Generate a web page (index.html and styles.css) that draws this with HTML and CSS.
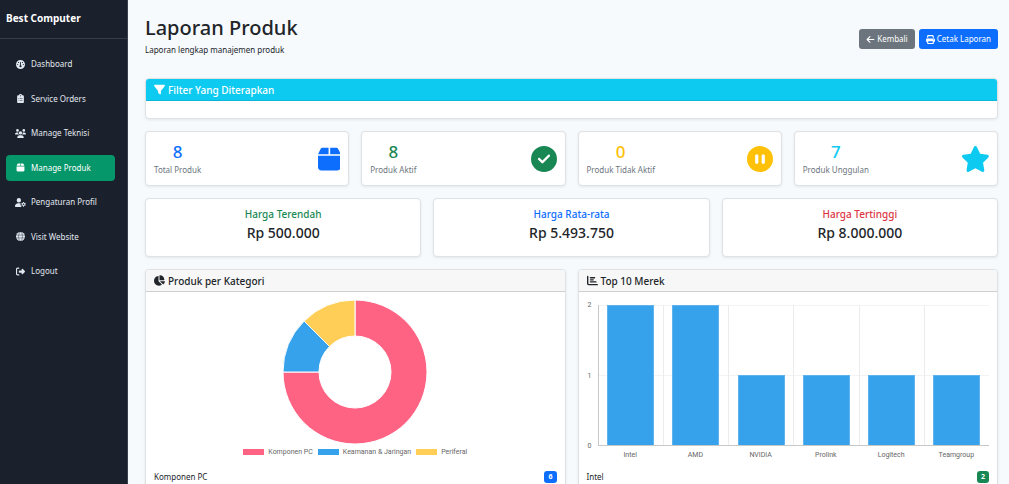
FILE: index.html
```html
<!DOCTYPE html>
<html lang="id">
<head>
<meta charset="utf-8">
<meta name="viewport" content="width=device-width, initial-scale=1">
<title>Laporan Produk</title>
<link rel="stylesheet" href="styles.css">
</head>
<body>
<aside class="sidebar">
  <div class="brand">Best Computer</div>
  <nav class="nav">
    <a class="nav-item" href="#"><svg class="nav-icon" viewBox="0 0 512 512"><path fill-rule="evenodd" d="M0 256a256 256 0 1 1 512 0A256 256 0 1 1 0 256zM320 352c0-26-16-48-40-59V120h-48v173c-24 11-40 33-40 59a64 64 0 1 0 128 0zM144 176a32 32 0 1 0 0-64 32 32 0 1 0 0 64zm-16 80a32 32 0 1 0-64 0 32 32 0 1 0 64 0zm288 32a32 32 0 1 0 0-64 32 32 0 1 0 0 64zM400 144a32 32 0 1 0-64 0 32 32 0 1 0 64 0z"/></svg>Dashboard</a>
    <a class="nav-item" href="#"><svg class="nav-icon" viewBox="0 0 512 512"><path fill-rule="evenodd" d="M256 0c-42 0-77 27-90 64h-38c-35 0-64 29-64 64v320c0 35 29 64 64 64h256c35 0 64-29 64-64V128c0-35-29-64-64-64h-38C333 27 298 0 256 0zm0 64a32 32 0 1 1 0 64 32 32 0 1 1 0-64zM144 256a24 24 0 1 1 48 0 24 24 0 1 1-48 0zm80-16h144v32H224zM144 352a24 24 0 1 1 48 0 24 24 0 1 1-48 0zm80-16h144v32H224z"/></svg>Service Orders</a>
    <a class="nav-item" href="#"><svg class="nav-icon" viewBox="0 0 640 512"><path d="M144 0a80 80 0 1 1 0 160 80 80 0 1 1 0-160zm368 0a80 80 0 1 1 0 160 80 80 0 1 1 0-160zM0 299c0-59 48-107 107-107h43c16 0 31 4 44 10-13 48 5 90 42 118H21c-12 0-21-10-21-21zm405 21c36-28 54-70 42-118 14-6 29-10 44-10h43c59 0 106 48 106 107 0 11-9 21-21 21H405zM224 224a96 96 0 1 1 192 0 96 96 0 1 1-192 0zM128 485c0-73 60-133 133-133h118c73 0 133 60 133 133 0 15-12 27-27 27H155c-15 0-27-12-27-27z"/></svg>Manage Teknisi</a>
    <a class="nav-item active" href="#" aria-current="page"><svg class="nav-icon" viewBox="0 0 448 512"><path d="M50.700 58.500L0 160H208V32H93.700C75.500 32 58.900 42.300 50.700 58.500zM240 160H448L397.300 58.500C389.100 42.300 372.500 32 354.300 32H240V160zm208 32H0V416c0 35.300 28.700 64 64 64H384c35.300 0 64-28.700 64-64V192z"/></svg>Manage Produk</a>
    <a class="nav-item" href="#"><svg class="nav-icon" viewBox="0 0 640 512"><path fill-rule="evenodd" d="M224 0a128 128 0 1 1 0 256 128 128 0 1 1 0-256zM178 304h92c20 0 40 3 58 10-18 60-2 130 46 178l24 20H30c-17 0-30-13-30-30 0-98 80-178 178-178zM472 224h48l10 46 28 16 45-15 24 42-35 31v32l35 31-24 42-45-15-28 16-10 46h-48l-10-46-28-16-45 15-24-42 35-31v-32l-35-31 24-42 45 15 28-16zm24 88a48 48 0 1 0 0 96 48 48 0 1 0 0-96z"/></svg>Pengaturan Profil</a>
    <a class="nav-item" href="#"><svg class="nav-icon" viewBox="0 0 512 512"><circle cx="256" cy="256" r="256"/><g class="globe-lines"><ellipse cx="256" cy="256" rx="112" ry="256"/><path d="M0 176h512M0 336h512"/></g></svg>Visit Website</a>
    <a class="nav-item" href="#"><svg class="nav-icon" viewBox="0 0 512 512"><path d="M377.900 105.900L500.700 228.700c7.200 7.200 11.300 17.100 11.300 27.300s-4.100 20.100-11.300 27.300L377.900 406.100c-6.400 6.400-15 9.900-24 9.900-18.700 0-33.900-15.200-33.900-33.900V320H192c-17.700 0-32-14.300-32-32v-64c0-17.700 14.300-32 32-32h128v-62.100c0-18.700 15.200-33.900 33.900-33.900 9 0 17.600 3.600 24 9.900zM160 96H96c-17.700 0-32 14.300-32 32v256c0 17.700 14.300 32 32 32h64c17.700 0 32 14.300 32 32s-14.300 32-32 32H96c-53 0-96-43-96-96V128C0 75 43 32 96 32h64c17.700 0 32 14.300 32 32s-14.300 32-32 32z"/></svg>Logout</a>
  </nav>
</aside>
<main class="main">
  <header class="page-head">
    <div>
      <h1>Laporan Produk</h1>
      <p class="subtitle">Laporan lengkap manajemen produk</p>
    </div>
    <div class="actions">
      <button class="btn btn-secondary" type="button"><svg class="btn-icon" viewBox="0 0 448 512"><path d="M9.400 233.400c-12.500 12.500-12.500 32.800 0 45.300l160 160c12.500 12.500 32.800 12.500 45.300 0s12.500-32.800 0-45.300L109.200 288H416c17.700 0 32-14.300 32-32s-14.300-32-32-32H109.300L214.600 118.600c12.500-12.500 12.500-32.800 0-45.300s-32.800-12.500-45.300 0l-160 160z"/></svg>Kembali</button>
      <button class="btn btn-primary" type="button"><svg class="btn-icon" viewBox="0 0 512 512"><path d="M128 0C92.700 0 64 28.700 64 64v96h64V64H354.700L384 93.300V160h64V93.300c0-17-6.700-33.300-18.700-45.300L400 18.700C388 6.700 371.700 0 354.700 0H128zM384 352v96H128V352H384zm64 32h32c17.700 0 32-14.300 32-32V256c0-35.300-28.700-64-64-64H64c-35.300 0-64 28.700-64 64v96c0 17.700 14.300 32 32 32H64v64c0 35.300 28.700 64 64 64H384c35.300 0 64-28.700 64-64V384zM432 248a24 24 0 1 1 0 48 24 24 0 1 1 0-48z"/></svg>Cetak Laporan</button>
    </div>
  </header>

  <section class="card">
    <h2 class="card-head card-head-info"><svg class="head-icon" viewBox="0 0 512 512"><path d="M3.900 54.900C10.500 40.900 24.500 32 40 32H472c15.500 0 29.500 8.900 36.100 22.900s4.600 30.500-5.200 42.500L320 320.900V448c0 12.100-6.800 23.200-17.700 28.600s-23.800 4.300-33.500-3l-64-48c-8.100-6-12.800-15.500-12.800-25.600V320.900L9 97.300C-.7 85.400-2.800 68.800 3.900 54.900z"/></svg>Filter Yang Diterapkan</h2>
    <div class="filter-body"></div>
  </section>

  <section class="stats">
    <div class="card stat blue"><div class="stat-text"><strong>8</strong><span>Total Produk</span></div><svg class="stat-icon" viewBox="0 0 448 512"><path d="M50.700 58.500L0 160H208V32H93.700C75.500 32 58.900 42.300 50.700 58.500zM240 160H448L397.300 58.500C389.100 42.300 372.500 32 354.300 32H240V160zm208 32H0V416c0 35.300 28.700 64 64 64H384c35.300 0 64-28.700 64-64V192z"/></svg></div>
    <div class="card stat green"><div class="stat-text"><strong>8</strong><span>Produk Aktif</span></div><svg class="stat-icon" viewBox="0 0 512 512"><path d="M256 512A256 256 0 1 0 256 0a256 256 0 1 0 0 512zM369 209L241 337c-9.400 9.400-24.600 9.400-33.900 0l-64-64c-9.400-9.400-9.400-24.600 0-33.900s24.600-9.400 33.900 0l47 47L335 175c9.400-9.400 24.600-9.400 33.900 0s9.400 24.600 0 33.900z"/></svg></div>
    <div class="card stat yellow"><div class="stat-text"><strong>0</strong><span>Produk Tidak Aktif</span></div><svg class="stat-icon" viewBox="0 0 512 512"><path d="M256 512A256 256 0 1 0 256 0a256 256 0 1 0 0 512zM224 192V320c0 17.700-14.300 32-32 32s-32-14.300-32-32V192c0-17.700 14.300-32 32-32s32 14.300 32 32zm128 0V320c0 17.700-14.300 32-32 32s-32-14.300-32-32V192c0-17.700 14.300-32 32-32s32 14.300 32 32z"/></svg></div>
    <div class="card stat cyan"><div class="stat-text"><strong>7</strong><span>Produk Unggulan</span></div><svg class="stat-icon" viewBox="24 0 528 512"><path d="M316.900 18C311.600 7 300.400 0 288.100 0s-23.400 7-28.800 18L195 150.300 51.400 171.500c-12 1.800-22 10.200-25.700 21.700s-.7 24.200 7.900 32.700L137.800 329 113.200 474.700c-2 12 3 24.200 12.900 31.300s23 8 33.800 2.300l128.300-68.500 128.300 68.500c10.800 5.700 23.900 4.900 33.800-2.300s14.900-19.300 12.900-31.300L438.500 329 542.700 225.900c8.600-8.500 11.700-21.200 7.900-32.700s-13.700-19.900-25.700-21.700L381.200 150.300 316.900 18z"/></svg></div>
  </section>

  <section class="prices">
    <div class="card price"><h3 class="green">Harga Terendah</h3><p>Rp 500.000</p></div>
    <div class="card price"><h3 class="blue">Harga Rata-rata</h3><p>Rp 5.493.750</p></div>
    <div class="card price"><h3 class="red">Harga Tertinggi</h3><p>Rp 8.000.000</p></div>
  </section>

  <section class="charts">
    <div class="card">
      <h2 class="card-head"><svg class="head-icon" viewBox="32 0 544 512"><path d="M304 240V16.600c0-9 7-16.600 16-16.600C443.700 0 544 100.300 544 224c0 9-7.600 16-16.600 16H304zM32 272C32 150.700 122.100 50.300 239 34.300c9.200-1.300 17 6.100 17 15.400V288L412.500 444.500c6.700 6.700 6.200 17.700-1.500 23.100C371.800 495.600 323.800 512 272 512 139.500 512 32 404.600 32 272zm526.400 16c9.300 0 16.600 7.800 15.400 17-7.700 55.900-34.600 105.600-73.900 142.300-6 5.600-15.400 5.200-21.200-.7L320 288H558.400z"/></svg>Produk per Kategori</h2>
      <div class="card-body">
        <div class="chart donut-chart">
          <svg class="donut" viewBox="-72 -72 144 144" role="img" aria-label="Produk per Kategori">
            <path class="slice-pink" d="M0-72A72 72 0 1 1-72 0H-36A36 36 0 1 0 0-36z"/>
            <path class="slice-blue" d="M-72 0A72 72 0 0 1-50.900-50.900L-25.500-25.500A36 36 0 0 0-36 0z"/>
            <path class="slice-yellow" d="M-50.900-50.900A72 72 0 0 1 0-72V-36A36 36 0 0 0-25.500-25.500z"/>
          </svg>
          <ul class="legend">
            <li><i class="swatch pink"></i>Komponen PC</li>
            <li><i class="swatch sky"></i>Keamanan &amp; Jaringan</li>
            <li><i class="swatch gold"></i>Periferal</li>
          </ul>
        </div>
        <div class="row"><span>Komponen PC</span><b class="badge badge-blue">6</b></div>
      </div>
    </div>
    <div class="card">
      <h2 class="card-head"><svg class="head-icon" viewBox="0 0 512 512"><path d="M32 32c17.700 0 32 14.300 32 32V400c0 8.800 7.200 16 16 16H480c17.700 0 32 14.300 32 32s-14.300 32-32 32H80c-44.200 0-80-35.800-80-80V64C0 46.300 14.300 32 32 32zm96 96c0-17.700 14.300-32 32-32H352c17.700 0 32 14.300 32 32s-14.300 32-32 32H160c-17.700 0-32-14.300-32-32zm32 64H288c17.700 0 32 14.300 32 32s-14.300 32-32 32H160c-17.700 0-32-14.300-32-32s14.300-32 32-32zm0 96H416c17.700 0 32 14.300 32 32s-14.300 32-32 32H160c-17.700 0-32-14.300-32-32s14.300-32 32-32z"/></svg>Top 10 Merek</h2>
      <div class="card-body">
        <div class="chart bar-chart">
          <div class="y-axis"><span>2</span><span>1</span><span>0</span></div>
          <div class="plot">
            <div class="slot"><div class="bar" style="height:100%"></div></div>
            <div class="slot"><div class="bar" style="height:100%"></div></div>
            <div class="slot"><div class="bar" style="height:50%"></div></div>
            <div class="slot"><div class="bar" style="height:50%"></div></div>
            <div class="slot"><div class="bar" style="height:50%"></div></div>
            <div class="slot"><div class="bar" style="height:50%"></div></div>
          </div>
          <div class="x-axis"><span>Intel</span><span>AMD</span><span>NVIDIA</span><span>Prolink</span><span>Logitech</span><span>Teamgroup</span></div>
        </div>
        <div class="row"><span>Intel</span><b class="badge badge-green">2</b></div>
      </div>
    </div>
  </section>
</main>
</body>
</html>
```
FILE: styles.css
```css
* { box-sizing: border-box; }
html, body { height: 100%; }
body {
  margin: 0;
  display: flex;
  overflow: hidden;
  background: #f6fafd;
  color: #212529;
  font-family: "Noto Sans", "Open Sans", sans-serif;
  font-size: 8px;
  line-height: 12px;
}
h1, h2, h3, p, ul { margin: 0; padding: 0; }
svg { display: block; fill: currentColor; flex: none; }

.sidebar {
  flex: none;
  width: 128px;
  background: #1a202c;
  border-right: 1px solid #3a4150;
  color: #e2e8f0;
}
.brand {
  padding: 10px 6px 12px;
  border-bottom: 1px solid #353b47;
  color: #fff;
  font-size: 10px;
  font-weight: 700;
  line-height: 16px;
}
.nav {
  display: flex;
  flex-direction: column;
  justify-content: space-between;
  height: 233px;
  margin-top: 12px;
  padding: 0 12px 0 6px;
}
.nav-item {
  display: flex;
  align-items: center;
  gap: 5px;
  height: 26px;
  padding: 0 9px;
  border-radius: 4px;
  color: inherit;
  text-decoration: none;
}
.nav-item.active { background: #059669; color: #fff; }
.nav-icon { width: 11px; height: 9px; }
.globe-lines { fill: none; stroke: #1a202c; stroke-width: 24; }

.main {
  flex: 1;
  min-width: 0;
  display: flex;
  flex-direction: column;
  gap: 12px;
  padding: 13px 11px 0 17px;
}
.page-head {
  display: flex;
  justify-content: space-between;
  align-items: center;
  padding-bottom: 10px;
}
h1 { font-size: 20px; font-weight: 500; line-height: 30px; }
.subtitle { line-height: 13px; }
.actions { display: flex; gap: 4px; padding-top: 9px; }
.btn {
  display: flex;
  align-items: center;
  gap: 2px;
  height: 20px;
  padding: 0 7px;
  border: 0;
  border-radius: 3px;
  color: #fff;
  font: inherit;
}
.btn-secondary { background: #6c757d; }
.btn-primary { background: #0d6efd; }
.btn-icon { width: 9px; height: 9px; }

.card {
  min-width: 0;
  background: #fff;
  border: 1px solid #dfe2e5;
  border-radius: 4px;
  box-shadow: 0 1px 3px rgba(0, 0, 0, .08);
}
.card-head {
  display: flex;
  align-items: center;
  gap: 3px;
  height: 22px;
  padding: 0 8px;
  border-bottom: 1px solid #cdcfd1;
  border-radius: 3px 3px 0 0;
  background: #f7f7f7;
  font-size: 10px;
  font-weight: 500;
}
.card-head-info { background: #0dcaf0; border-color: #0cb6d8; color: #fff; }
.head-icon { width: 11px; height: 11px; }
.filter-body { height: 17px; }

.stats { display: grid; grid-template-columns: repeat(4, 1fr); gap: 12px; }
.stat {
  display: flex;
  justify-content: space-between;
  align-items: center;
  height: 55px;
  padding: 0 8px;
}
.stat-text { text-align: center; }
.stat-text strong { display: block; font-size: 17px; font-weight: 500; line-height: 22px; }
.stat-text span { display: block; color: #6c757d; line-height: 14px; }
.stat-icon { height: 26px; }
.blue { color: #0d6efd; }
.green { color: #198754; }
.yellow { color: #ffc107; }
.cyan { color: #0dcaf0; }
.red { color: #dc3545; }

.prices { display: grid; grid-template-columns: repeat(3, 1fr); gap: 12px; }
.price { padding: 8px 8px 12px; text-align: center; }
.price h3 { font-size: 10px; font-weight: 500; line-height: 15px; }
.price p { font-size: 14px; font-weight: 500; line-height: 22px; }

.charts { display: grid; grid-template-columns: repeat(2, 1fr); gap: 12px; }
.card-body { padding: 8px; }
.chart {
  height: 161px;
  color: #666;
  font-family: Roboto, "Liberation Sans", sans-serif;
  font-size: 7px;
  line-height: 8px;
}
.donut-chart { display: flex; flex-direction: column; align-items: center; gap: 4px; }
.donut { width: 144px; height: 144px; stroke: #fff; stroke-width: 1; }
.slice-pink { fill: #ff6384; }
.slice-blue { fill: #36a2eb; }
.slice-yellow { fill: #ffce56; }
.legend { display: flex; gap: 5px; list-style: none; }
.legend li { display: flex; align-items: center; gap: 4px; }
.swatch { width: 21px; height: 6px; }
.pink { background: #ff6384; }
.sky { background: #36a2eb; }
.gold { background: #ffce56; }

.bar-chart {
  display: grid;
  grid-template-columns: 11px 1fr;
  grid-template-rows: 141px auto;
  padding-top: 5px;
}
.y-axis {
  display: flex;
  flex-direction: column;
  justify-content: space-between;
  margin: -4px 0;
  padding-left: 1px;
}
.plot {
  display: grid;
  grid-template-columns: repeat(6, 1fr);
  border-bottom: 1px solid #c8c8c8;
  background: linear-gradient(#f3f3f3 1px, transparent 1px) 0 0 / 100% 70px;
}
.slot {
  display: flex;
  align-items: flex-end;
  justify-content: center;
  border-left: 1px solid #ececec;
}
.slot:first-child { border-color: #c8c8c8; }
.bar { width: 73%; background: #36a2eb; border: 1px solid #5fb3ee; border-bottom: 0; }
.x-axis {
  grid-column: 2;
  display: grid;
  grid-template-columns: repeat(6, 1fr);
  padding-top: 5px;
  text-align: center;
}

.row { display: flex; justify-content: space-between; align-items: center; padding-top: 10px; }
.badge {
  padding: 0 4px;
  border-radius: 3px;
  color: #fff;
  font-size: 7px;
  line-height: 12px;
}
.badge-blue { background: #0d6efd; }
.badge-green { background: #198754; }
```
